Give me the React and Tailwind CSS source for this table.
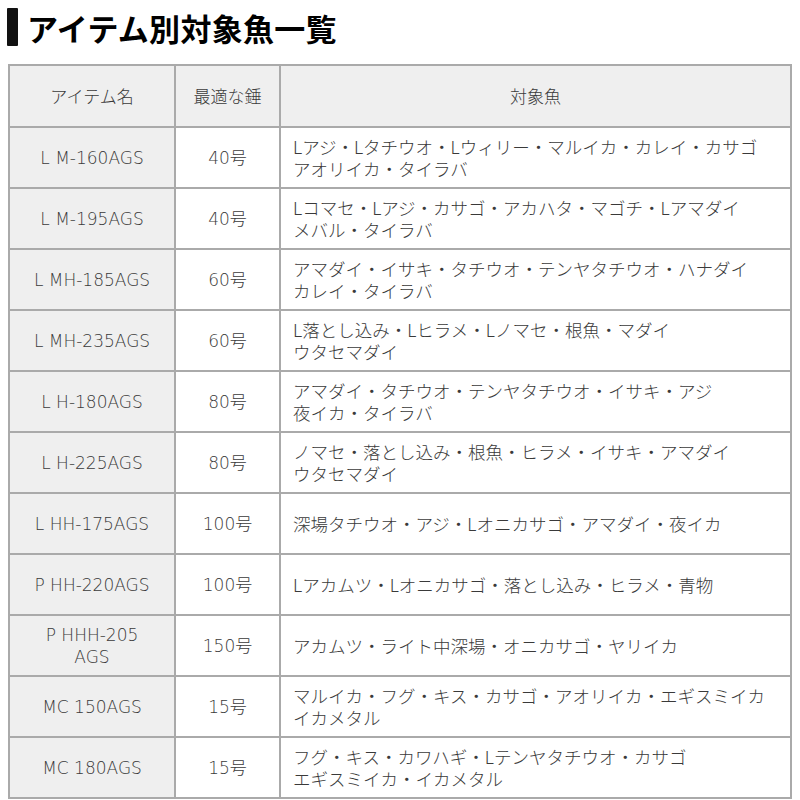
import React from 'react'

const rows = [
  ['L M-160AGS', '40号', ['Lアジ・Lタチウオ・Lウィリー・マルイカ・カレイ・カサゴ', 'アオリイカ・タイラバ']],
  ['L M-195AGS', '40号', ['Lコマセ・Lアジ・カサゴ・アカハタ・マゴチ・Lアマダイ', 'メバル・タイラバ']],
  ['L MH-185AGS', '60号', ['アマダイ・イサキ・タチウオ・テンヤタチウオ・ハナダイ', 'カレイ・タイラバ']],
  ['L MH-235AGS', '60号', ['L落とし込み・Lヒラメ・Lノマセ・根魚・マダイ', 'ウタセマダイ']],
  ['L H-180AGS', '80号', ['アマダイ・タチウオ・テンヤタチウオ・イサキ・アジ', '夜イカ・タイラバ']],
  ['L H-225AGS', '80号', ['ノマセ・落とし込み・根魚・ヒラメ・イサキ・アマダイ', 'ウタセマダイ']],
  ['L HH-175AGS', '100号', ['深場タチウオ・アジ・Lオニカサゴ・アマダイ・夜イカ']],
  ['P HH-220AGS', '100号', ['Lアカムツ・Lオニカサゴ・落とし込み・ヒラメ・青物']],
  [['P HHH-205', 'AGS'], '150号', ['アカムツ・ライト中深場・オニカサゴ・ヤリイカ']],
  ['MC 150AGS', '15号', ['マルイカ・フグ・キス・カサゴ・アオリイカ・エギスミイカ', 'イカメタル']],
  ['MC 180AGS', '15号', ['フグ・キス・カワハギ・Lテンヤタチウオ・カサゴ', 'エギスミイカ・イカメタル']],
]

function Lines({ value }) {
  const list = Array.isArray(value) ? value : [value]
  return list.map((line, i) => (
    <React.Fragment key={i}>
      {i > 0 && <br />}
      {line}
    </React.Fragment>
  ))
}

export default function App() {
  return (
    <div className="w-[800px] h-[800px] bg-white overflow-hidden text-[#3a3a3a] font-['DejaVu_Sans','Noto_Sans_CJK_JP',sans-serif]">
      {/* Title */}
      <div className="flex items-center gap-[9px] pl-[7px] pt-[8px] h-[46px]">
        <div className="w-[11px] h-[38px] bg-[#111] rounded-[1px]" />
        <h1 className="text-[31px] font-bold leading-none text-black tracking-[0.3px] font-['Noto_Sans_CJK_JP',sans-serif]">
          アイテム別対象魚一覧
        </h1>
      </div>

      {/* Table */}
      <table className="ml-[8px] mt-[18px] w-[784px] border-collapse table-fixed leading-[22px]">
        <colgroup>
          <col className="w-[166px]" />
          <col className="w-[105px]" />
          <col />
        </colgroup>
        <thead>
          <tr className="h-[62px] bg-[#efefef] text-[17px] font-['Noto_Sans_CJK_JP',sans-serif]">
            <th className="border-2 border-[#aaa] font-light text-center">アイテム名</th>
            <th className="border-2 border-[#aaa] font-light text-center">最適な錘</th>
            <th className="border-2 border-[#aaa] font-light text-center">対象魚</th>
          </tr>
        </thead>
        <tbody>
          {rows.map((r, i) => (
            <tr key={i} className="h-[61px]">
              <td className="border-2 border-[#aaa] bg-[#efefef] text-center text-[17px] font-light">
                <Lines value={r[0]} />
              </td>
              <td className="border-2 border-[#aaa] text-center text-[17px] font-light">{r[1]}</td>
              <td className="border-2 border-[#aaa] pl-[12px] whitespace-nowrap font-['Noto_Sans_CJK_JP',sans-serif] font-light text-[17.5px] leading-[22px]">
                <Lines value={r[2]} />
              </td>
            </tr>
          ))}
        </tbody>
      </table>
    </div>
  )
}
